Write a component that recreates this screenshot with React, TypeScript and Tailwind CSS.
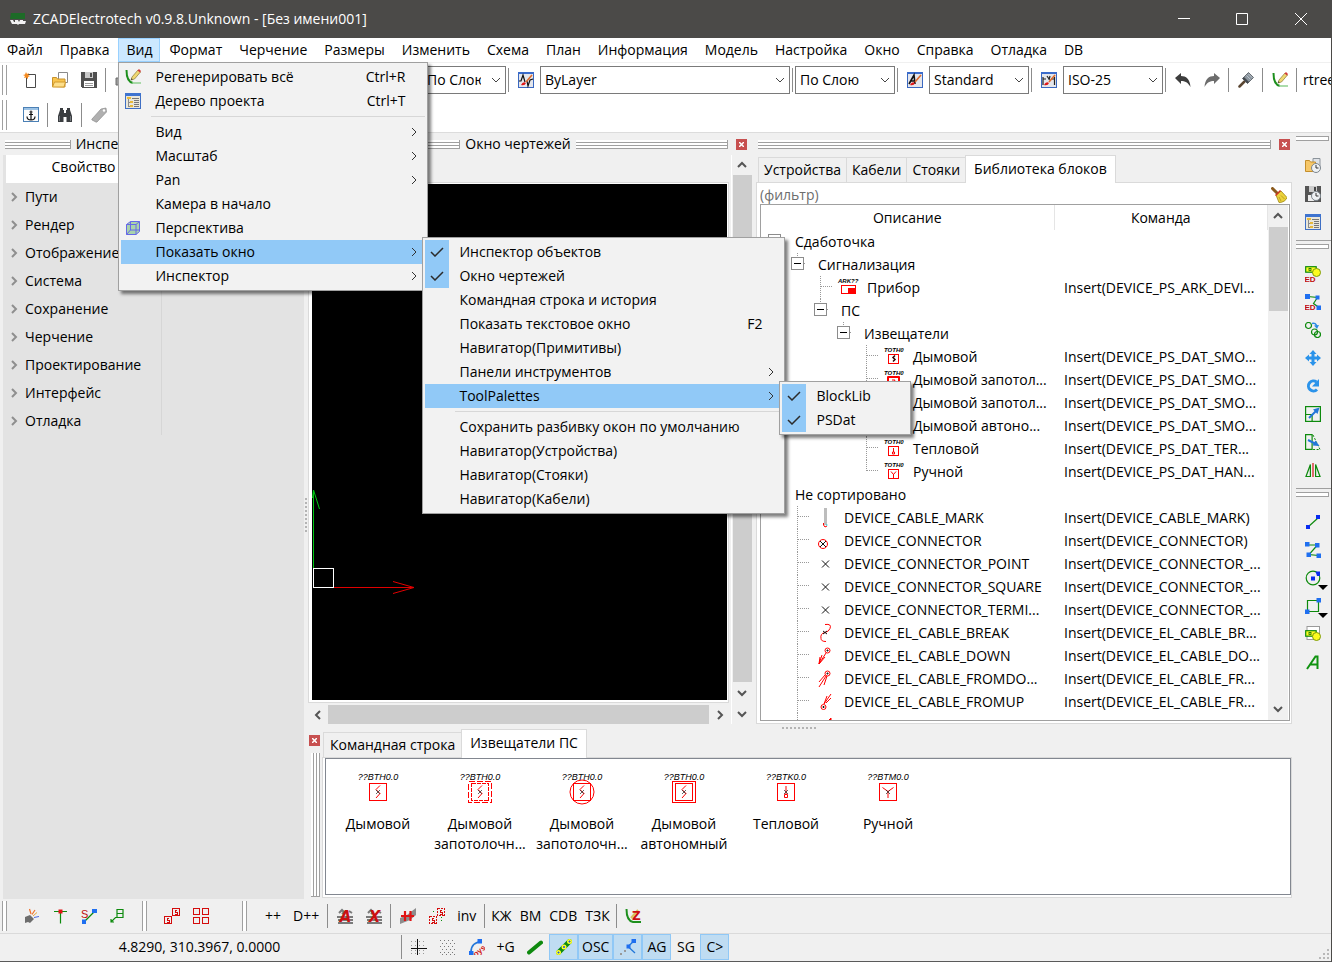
import { ReactNode } from 'react';
import clsx from 'clsx';

// ---------- icons ----------

function Svg({ children, size = 16, crisp = false }: { children: ReactNode; size?: number; crisp?: boolean }) {
  return (
    <svg
      width={size}
      height={size}
      viewBox="0 0 16 16"
      fill="none"
      className="shrink-0"
      shapeRendering={crisp ? 'crispEdges' : 'auto'}
      aria-hidden="true"
    >
      {children}
    </svg>
  );
}

const NewIcon = () => (
  <Svg>
    <path d="M5 2.500h7.500v13h-9V5" fill="#fff" stroke="#4a4a4a" />
    <path d="M3 0l1 2 2-1-1 2 2 1-2 1 0 2-2-1.500L1 6l1-2-2-1 2-.5z" fill="#f58a1f" />
  </Svg>
);

const OpenIcon = () => (
  <Svg>
    <path d="M6.500.500h9v10h-9z" fill="#fff" stroke="#8a8a8a" />
    <path d="M.5 14.500v-9h4l1 1.500h7.500v8z" fill="#f9c54e" stroke="#c8922a" />
    <path d="M.5 15l2-5h11l-1.500 5z" fill="#fddf8b" stroke="#d19a2e" />
  </Svg>
);

const SaveIcon = () => (
  <Svg crisp>
    <path d="M0 0h15l1 1v15H1l-1-1z" fill="#4f4f4f" />
    <path d="M4 0h8v6H4z" fill="#c9c9c9" />
    <path d="M9 1h2v4H9z" fill="#4f4f4f" />
    <path d="M3 9h10v6H3z" fill="#fff" />
    <path d="M4 11h8M4 13h8" stroke="#9a9a9a" />
  </Svg>
);

const PrintIcon = () => (
  <Svg>
    <path d="M1 6h14v7H1z" fill="#9c9c9c" stroke="#6c6c6c" />
    <path d="M4 1h8v5H4z" fill="#fff" stroke="#777" />
  </Svg>
);

const RegenIcon = () => (
  <Svg>
    <path d="M1.500 1C1.500 8 3 13 8 14" stroke="#1d8f1d" strokeWidth="2" />
    <path d="M7 14h9" stroke="#8fd08f" strokeWidth="1.500" />
    <path d="M6 11l1-3 6-7 2.500 2-6 7z" fill="#f0d872" stroke="#8a7a3a" strokeWidth=".7" />
    <path d="M12.500 1.500l2.500 2 1-1.500-2-2z" fill="#d43c3c" />
    <path d="M6 11l.6-1.800 1.200 1z" fill="#333" />
  </Svg>
);

const TreeIcon = () => (
  <Svg crisp>
    <rect x=".5" y=".5" width="15" height="15" fill="#e9e6da" stroke="#3e6fc4" />
    <path d="M0 0h16v3H0z" fill="#3e73cf" />
    <path d="M2 4h4v2H2zM5 8h3v2H5zM5 12h3v2H5z" fill="#e8b93a" />
    <path d="M3.500 6v7.500H5M3.500 9H5" stroke="#8a8a8a" />
    <path d="M7 5h7M9 7h5M9 9h5M9 11h5M9 13h5" stroke="#777" />
  </Svg>
);

const CubeIcon = () => (
  <Svg>
    <path d="M1.500 4.500l4-3h9v10l-3.500 3h-9.500z" fill="#a9d3ac" stroke="#6668e8" />
    <path d="M1.500 4.500h9.500l3.500-3M11 4.500v10M5.500 1.500v8.500h9M5.500 10l-4 4.500" stroke="#6668e8" />
  </Svg>
);

const AnchorIcon = () => (
  <Svg>
    <rect x=".5" y=".5" width="15" height="14" fill="#fdfdfd" stroke="#4b80b5" />
    <path d="M1 1h14v2H1z" fill="#9cc3e6" />
    <circle cx="8" cy="5" r="1" stroke="#111" />
    <path d="M8 6v7M6 7.500h4M4 9.500C4 12 6 13 8 13s4-1 4-3.500" stroke="#111" strokeWidth="1.200" />
  </Svg>
);

const BinocularsIcon = () => (
  <Svg>
    <path d="M3 1h3v2h1v3h2V3h1V1h3v2l1 3 1 3v6H9.500v-5h-3v5H1V9l1-3 1-3z" fill="#3a3d40" />
    <path d="M2.500 9v5M13.500 9v5" stroke="#75797d" />
  </Svg>
);

const TagIcon = () => (
  <Svg>
    <path d="M1 12L10 2l5-1 .5 4-9.500 10q-1 .5-2-.500l-3-1.500q-.5-.5 0-1z" fill="#b0b0b0" stroke="#8c8c8c" strokeWidth=".7" />
    <circle cx="13" cy="3.500" r="1.200" fill="#fff" />
  </Svg>
);

function StyleIcon({ kind }: { kind: 'line' | 'text' | 'dim' }) {
  return (
    <Svg>
      <rect x=".5" y=".5" width="15" height="15" fill="#e4e6ec" stroke="#3a68c0" />
      <path d="M0 0h16v2H0z" fill="#3a6bcb" />
      {kind === 'line' && <path d="M1 9h2l2-6 2 7M9 9l1 5 2-6 3-1" stroke="#111" strokeWidth="1.200" />}
      {kind === 'text' && <path d="M2 12l5-9 1 9M4 9h4" stroke="#111" strokeWidth="1.600" />}
      {kind === 'dim' && <path d="M2 5v8M13.500 5v8M2 7h3M10 7h3M6 4l2 3M9 4l-1 4" stroke="#222" strokeWidth="1.200" />}
      <path d="M8 10l6-7" stroke="#df6a2b" strokeWidth="1.600" />
      <path d="M3 13q2-4 5-2-1 3-5 2z" fill="#e01818" />
    </Svg>
  );
}

const UndoIcon = () => (
  <Svg>
    <path d="M0 6l6-5v3c5 0 9 3 9.500 11C13 10.500 10 9 6 9v3z" fill="#3d3d3d" />
  </Svg>
);

const RedoIcon = () => (
  <Svg>
    <path d="M16 6l-6-5v3C5 4 1 7 .5 15 3 10.500 6 9 10 9v3z" fill="#6d6d6d" />
  </Svg>
);

const BrushIcon = () => (
  <Svg>
    <path d="M1.500 14.500l5-5" stroke="#5a4632" strokeWidth="2.500" strokeLinecap="round" />
    <path d="M4.500 6.500l5 5 6-6L10.500.500z" fill="#8c969f" stroke="#4f565c" strokeWidth=".8" />
    <path d="M4.500 6.500l5 5 1.500-1.500-5-5z" fill="#44494e" />
    <path d="M8.500 3.500l4 4M10.500 2l4 4" stroke="#c3ccd4" strokeWidth=".8" />
  </Svg>
);

const BroomIcon = () => (
  <Svg>
    <path d="M1.500 1.500l5 5" stroke="#8a5a1d" strokeWidth="3" strokeLinecap="round" />
    <path d="M5 8l5-4 6 6.500c-1 3-4 5-8 5z" fill="#ecd23c" stroke="#9c8512" strokeWidth=".8" />
    <path d="M4.500 8.500l5-5" stroke="#cf3320" strokeWidth="1.500" />
    <path d="M8 10l2 4M10 8.500l3.500 3.500" stroke="#a88f17" strokeWidth=".7" />
  </Svg>
);

const Clock = () => (
  <>
    <circle cx="11" cy="10" r="4.500" fill="#eef1f4" stroke="#7c858d" />
    <path d="M11 7v3h2.500" stroke="#333" />
  </>
);

const OpenRecentIcon = () => (
  <Svg>
    <path d="M8 .5h7v9H8z" fill="#dfe3e8" stroke="#8d949b" />
    <path d="M.5 13.500v-11h4l1 1.500h5v9.500z" fill="#f6c768" stroke="#c58f2c" />
    <Clock />
  </Svg>
);

const SaveRecentIcon = () => (
  <Svg>
    <path d="M0 0h16v16H0z" fill="#555" />
    <path d="M4 0h8v6H4z" fill="#ccc" />
    <path d="M9 1h2v4H9z" fill="#444" />
    <path d="M3 9h6v6H3z" fill="#eee" />
    <Clock />
  </Svg>
);

const BlockShape = ({ y = 0 }: { y?: number }) => (
  <>
    <rect x=".7" y={y + 0.7} width="10.500" height="5.500" fill="#fcfc1e" stroke="#0d8a0d" strokeWidth="1.200" />
    <rect x="4" y={y + 2.5} width="2" height="2" stroke="#0d6a0d" strokeWidth=".8" />
    <circle cx="11.500" cy={y + 6.5} r="4" fill="#fcfc1e" stroke="#7d9a0d" />
  </>
);

const EdText = () => (
  <text x="-.5" y="16" fontSize="8" fontWeight="700" fill="#c00d0d" fontFamily="Liberation Sans, sans-serif">
    ED
  </text>
);

const EditBlockIcon = () => (
  <Svg>
    <BlockShape />
    <EdText />
  </Svg>
);

const EditPolyIcon = () => (
  <Svg>
    <path d="M2.500 2.500l10 1-4 6 5.500 4" stroke="#0d8a0d" strokeWidth="1.200" />
    <path d="M0 0h5v5H0zM10.500 1.500h4v4h-4zM11.500 11.500H16V16h-4.500z" fill="#1f6ff0" />
    <EdText />
  </Svg>
);

const CopyIcon = () => (
  <Svg>
    <circle cx="3.500" cy="3.500" r="3" stroke="#0d8a0d" strokeWidth="1.200" />
    <circle cx="9.500" cy="10" r="3" stroke="#0d8a0d" strokeWidth="1.200" />
    <circle cx="12.500" cy="12.500" r="3" stroke="#0d8a0d" strokeWidth="1.200" />
    <path d="M7 1.500q4-1 4.500 2.500" stroke="#2b8be6" strokeWidth="1.600" />
    <path d="M9 3.500l5-.5-2 4z" fill="#2b8be6" />
  </Svg>
);

const MoveIcon = () => (
  <Svg>
    <path
      d="M8 0l3.500 4H9.500v2.500H12v-2L16 8l-4 3.500v-2H9.500V12h2L8 16l-3.500-4h2V9.500H4v2L0 8l4-3.500v2h2.500V4h-2z"
      fill="#2b93ea"
    />
  </Svg>
);

const RotateIcon = () => (
  <Svg>
    <path d="M12 11.500A5 5 0 1 1 11.500 4" stroke="#2b93ea" strokeWidth="3" />
    <path d="M14 1v7.500H7z" fill="#2b93ea" />
  </Svg>
);

const ScaleIcon = () => (
  <Svg>
    <rect x=".6" y=".6" width="14.800" height="14.800" stroke="#0d8a0d" strokeWidth="1.200" />
    <path d="M.6 8.500h6.500v7" stroke="#0d8a0d" strokeWidth="1.200" />
    <path d="M4 12l7-7" stroke="#2277d8" strokeWidth="2" />
    <path d="M8 3.500L14.500 1.500 12.500 8z" fill="#2277d8" />
  </Svg>
);

const StretchIcon = () => (
  <Svg>
    <path d="M.6.600h6.500v14.800H.6z" stroke="#0d8a0d" strokeWidth="1.200" />
    <path d="M8 1l7 14.500H8" stroke="#0d8a0d" strokeDasharray="2 1.500" />
    <path d="M3 6l7 3.500" stroke="#2277d8" strokeWidth="2" />
    <path d="M10.500 6.500L14.500 12 7.500 11.500z" fill="#2277d8" />
  </Svg>
);

const MirrorIcon = () => (
  <Svg>
    <path d="M5.400 2.500v12H1zM10.600 2.500v12H15z" stroke="#0d8a0d" strokeWidth="1.200" />
    <path d="M8 1v14" stroke="#d01515" strokeWidth="1.200" />
  </Svg>
);

const LineIcon = () => (
  <Svg>
    <path d="M3 13l10-9" stroke="#0d8a0d" strokeWidth="1.200" />
    <path d="M1 11h4v4H1zM11 1h4v4h-4z" fill="#0a2cf0" />
  </Svg>
);

const PolylineIcon = () => (
  <Svg>
    <path d="M2.500 3h10L4 12.500l9.500 1" stroke="#0d8a0d" strokeWidth="1.200" />
    <path d="M0 0h4.500v4.500H0zM10 1h4.500v4.500H10zM1.500 10.500H6V15H1.500zM11.500 11.500H16V16h-4.500z" fill="#1f6ff0" />
  </Svg>
);

const CircleIcon = () => (
  <Svg>
    <circle cx="8" cy="8" r="6.800" stroke="#0d8a0d" strokeWidth="1.200" />
    <path d="M6 6.500h4v4H6zM10.500 1.500H15v4.500h-3z" fill="#0a2cf0" />
  </Svg>
);

const RectIcon = () => (
  <Svg>
    <path d="M2.500 2.500h11v11h-11z" stroke="#0d8a0d" strokeWidth="1.200" />
    <path d="M11.500 0H16v4.500h-4.500zM0 11.500h4.500V16H0z" fill="#1f6ff0" />
  </Svg>
);

const InsertBlockIcon = () => (
  <Svg>
    <rect x="2" y=".5" width="12.500" height="13" fill="#fff" stroke="#9a9a9a" />
    <BlockShape y={4} />
  </Svg>
);

const TextIcon = () => (
  <Svg>
    <path d="M2 15L10.500 2.500H12.500V15M5 10.500h7.500" stroke="#119311" strokeWidth="2" />
  </Svg>
);

// bottom toolbars
const LampIcon = () => (
  <Svg>
    <path d="M2 9l5-2 4 4-4 4-2-1-3 1z" fill="#6d6d6d" />
    <path d="M8 6L6.500 1M9 6.500L12 2" stroke="#f0702a" strokeWidth="1.200" />
    <path d="M10 8l4-3.500" stroke="#e9a53a" />
    <path d="M11 9.500l5-1" stroke="#4a66e0" />
  </Svg>
);

const TeeIcon = () => (
  <Svg>
    <path d="M2 3.500h13M8.500 3.500v12" stroke="#0d8a0d" strokeWidth="1.200" />
    <path d="M6.500 1.500h4v4h-4z" fill="#e01515" />
  </Svg>
);

const SplineIcon = () => (
  <Svg>
    <path d="M3 14L14 3" stroke="#0d8a0d" strokeWidth="1.200" />
    <path d="M1 11.500h4V16H1zM11 1h5v4h-5z" fill="#1f6ff0" />
    <text x="0" y="9.500" fontSize="11" fill="#c00d0d" fontFamily="Liberation Sans, sans-serif">S</text>
  </Svg>
);

const LeaderIcon = () => (
  <Svg>
    <path d="M7 1.500h6v8H7zM7 5.500h6M7 9.500H5.500L1 14M1 11v3h3" stroke="#0d8a0d" strokeWidth="1.200" />
  </Svg>
);

const LinkedBoxesIcon = () => (
  <Svg crisp>
    <path d="M.5 8.500h7v7h-7zM8.500.500h7v7h-7z" stroke="#d40c0c" />
    <path d="M5 10H3v2h2v2H3M13 2h-2v2h2v2h-2" stroke="#d40c0c" />
  </Svg>
);

const FourBoxesIcon = () => (
  <Svg crisp>
    <path d="M.5.500h6v6h-6zM9.500.500h6v6h-6zM.5 9.500h6v6h-6zM9.500 9.500h6v6h-6z" stroke="#d40c0c" />
  </Svg>
);

const CrossedTextIcon = ({ letter }: { letter: 'A' | 'X' }) => (
  <Svg>
    <path d="M0 9h16M1 12h15M1 15h15M2 5l3-3 2 2-2 2M12 3l3 2" stroke="#7a7a7a" strokeWidth="2" />
    <text x="8.500" y="13.500" textAnchor="middle" fontSize="15" fontWeight="700" fontStyle="italic" fill="#cc1010" fontFamily="DejaVu Sans, sans-serif">
      {letter}
    </text>
  </Svg>
);

const NumberingIcon = () => (
  <Svg>
    <path d="M0 16V10l7-3 5-4 4-3v7l-6 5z" fill="#8d8d8d" />
    <path d="M1 8h13M5 3v10M10.500 3v10" stroke="#e01515" strokeWidth="2.200" />
  </Svg>
);

const DashedBoxesIcon = () => (
  <Svg crisp>
    <path d="M.5 8.500h7v7h-7zM8.500.500h7v7h-7z" stroke="#d40c0c" strokeDasharray="2 1" />
    <path d="M5 10H3v2h2v2H3M13 2h-2v2h2v2h-2" stroke="#d40c0c" />
    <path d="M12.500 9v6M4.500 3v3" stroke="#0d8a0d" strokeDasharray="1 2" />
  </Svg>
);

const RegenZIcon = () => (
  <Svg>
    <path d="M1.500 1C1.500 8 3 13 8 14h8" stroke="#1d8f1d" strokeWidth="2" />
    <path d="M6 10l7-8" stroke="#d8c25c" strokeWidth="2" />
    <text x="7" y="12" fontSize="12" fontWeight="700" fill="#cc1010" fontFamily="DejaVu Sans, sans-serif">Z</text>
  </Svg>
);

const OrthoIcon = () => (
  <Svg crisp>
    <path d="M0 2h16M0 6h16M0 14h16M0 11h16" stroke="#999" strokeDasharray="1 3" />
    <path d="M6.500 0v16M0 9.500h16" stroke="#111" />
  </Svg>
);

const GridIcon = () => (
  <Svg crisp>
    <path d="M0 1h16M2 4h14M0 7h16M2 10h14M0 13h16M2 15h14" stroke="#777" strokeDasharray="1 3" />
  </Svg>
);

const OsnapIcon = () => (
  <Svg>
    <path d="M2 13C2 6 6 3 13 2.500" stroke="#2277d8" strokeWidth="1.600" />
    <path d="M0 12h4.500v4H0zM8.500 0H13v4.500H8.500z" fill="#1f6ff0" />
    <text x="3" y="16" fontSize="8" fontWeight="700" fill="#d01515" fontFamily="Liberation Sans, sans-serif" transform="rotate(-40 8 12)">
      oys
    </text>
  </Svg>
);

const ThickLineIcon = () => (
  <Svg>
    <path d="M2 13.500L14 3.500" stroke="#0f8a0f" strokeWidth="4" strokeLinecap="round" />
  </Svg>
);

const LineDotsIcon = () => (
  <Svg>
    <path d="M2.500 13.500L13.500 2.500" stroke="#0f8a0f" strokeWidth="5" strokeLinecap="round" />
    <g fill="#ffff2a">
      <circle cx="2.500" cy="13.500" r="2.500" />
      <circle cx="8" cy="8" r="2.500" />
      <circle cx="13.500" cy="2.500" r="2.500" />
    </g>
    <path d="M2 13h1v1H2zM7.500 7.500h1v1h-1zM13 2h1v1h-1z" stroke="#1c53d8" />
  </Svg>
);

const PolarIcon = () => (
  <Svg>
    <path d="M14 2L8 7.500 15 14" stroke="#2277d8" strokeWidth="1.300" />
    <path d="M11.500 0H16v4h-4.500zM6.500 5.500h4V9.500h-4z" fill="#1f6ff0" />
    <path d="M0 14h2v2H0zM4 11h2v2H4z" fill="#999" />
  </Svg>
);

// ---------- detector symbols ----------

type Detector = 'smoke' | 'dashed' | 'round' | 'double' | 'heat' | 'manual';

function DetectorIcon({ kind, label }: { kind: Detector; label: string }) {
  return (
    <div className="flex h-9 flex-col items-center">
      <span className="font-['Liberation_Sans',sans-serif] text-[9px] leading-[12px] text-black italic">{label}</span>
      <svg width="28" height="26" viewBox="0 0 28 26" fill="none" stroke="#ff0000" className="-mt-1 shrink-0" aria-hidden="true">
        <path d="M5.500 4.500h17v17h-17z" shapeRendering="crispEdges" strokeDasharray={kind === 'dashed' ? '4 1' : undefined} />
        {kind === 'dashed' && <path d="M2.500 2.500h23v21h-23z" shapeRendering="crispEdges" strokeDasharray="6 2" />}
        {kind === 'double' && <path d="M2.500 2.500h23v21h-23z" shapeRendering="crispEdges" />}
        {kind === 'round' && <circle cx="14" cy="13" r="12" />}
        {kind === 'heat' && <path d="M14 7v8M12.500 15.500h3v3h-3z" />}
        {kind === 'manual' && <path d="M8.500 8.500l5.500 4 5.500-4M14 12.500V19" />}
        {!['heat', 'manual'].includes(kind) && <path d="M16 6.500l-4 4 4 4-4 4.500" />}
        <path d="M12 11l4 4M16 11l-4 4" stroke="#222" strokeWidth=".7" />
      </svg>
    </div>
  );
}

type TreeIconKind =
  | 'ark' | 'smoke' | 'ceiling' | 'heat' | 'manual' | 'mark' | 'connector' | 'point' | 'break' | 'down' | 'fromdown' | 'fromup' | 'cut';

function DeviceIcon({ kind }: { kind: TreeIconKind }) {
  const boxed = ['smoke', 'ceiling', 'heat', 'manual'].includes(kind);
  return (
    <svg width="20" height="20" viewBox="0 0 20 20" fill="none" stroke="#ff0000" className="shrink-0 overflow-visible" aria-hidden="true">
      {(boxed || kind === 'ark') && (
        <text x="0" y="5" fontSize="6" fontStyle="italic" fontWeight="700" fill="#000" stroke="none" fontFamily="Liberation Sans, sans-serif">
          {kind === 'ark' ? 'ARK??' : 'ТОТН0'}
        </text>
      )}
      {boxed && <path d="M4.500 7.500h10v9h-10z" shapeRendering="crispEdges" />}
      {kind === 'smoke' && <path d="M11 8.500l-2 2 2 2-2 2" stroke="#300" strokeWidth="1.500" />}
      {kind === 'ceiling' && <path d="M3.500 6.500h12v11h-12zM8 10h3l-2 4" />}
      {kind === 'heat' && <path d="M9.500 9v4M8.500 13h2v2h-2z" />}
      {kind === 'manual' && <path d="M7 9.500l2.500 3 2.500-3M9.500 12v4" />}
      {kind === 'ark' && (
        <>
          <path d="M3.500 7.500h14v8h-14z" shapeRendering="crispEdges" />
          <path d="M10 10h8v6h-8z" fill="#ff0000" stroke="none" />
        </>
      )}
      {kind === 'mark' && (
        <>
          <path d="M10.500 0v17" stroke="#bdbdbd" strokeWidth="3" />
          <path d="M8.500 15v2l1.500 2 2-1" />
          <path d="M11 17h1.500" stroke="#00d8e8" />
        </>
      )}
      {kind === 'connector' && (
        <>
          <circle cx="8" cy="13" r="4.500" />
          <path d="M5 10l6 6M11 10l-6 6" stroke="#111" />
        </>
      )}
      {kind === 'point' && <path d="M7 6.500l7 7M14 6.500l-7 7" stroke="#111" />}
      {kind === 'break' && (
        <>
          <path d="M10 1.500q7-1 5 4-1 3-5 4-5 1-4 6 0 3 5 3" />
          <path d="M8 8l4 3M12 8l-4 3" stroke="#111" />
        </>
      )}
      {kind === 'down' && (
        <>
          <circle cx="12.500" cy="4.500" r="2.500" />
          <path d="M12 4h1v1h-1z" stroke="#111" />
          <path d="M11 7L4 18l1-7M4 18l6-7M4 18l3-9" />
        </>
      )}
      {kind === 'fromdown' && (
        <>
          <circle cx="12.500" cy="4.500" r="2.500" />
          <path d="M12 4h1v1h-1z" stroke="#111" />
          <path d="M11 7L4 18M12 7L9 16M10 6l-6 7" />
        </>
      )}
      {kind === 'fromup' && (
        <>
          <circle cx="8.500" cy="15" r="2.500" />
          <path d="M8 14.500h1v1H8z" stroke="#111" />
          <path d="M9 12l7-10M9 12L12 4M11 11l5-5" />
        </>
      )}
      {kind === 'cut' && <path d="M12 7l4-4v4z" fill="#ff0000" />}
    </svg>
  );
}

// ---------- shared pieces ----------

function Chevron({ dir, className = '' }: { dir: 'up' | 'down' | 'left' | 'right'; className?: string }) {
  const paths = { up: 'M1 7l4-4 4 4', down: 'M1 3l4 4 4-4', left: 'M7 1L3 5l4 4', right: 'M3 1l4 4-4 4' };
  return (
    <svg width="10" height="10" viewBox="0 0 10 10" fill="none" stroke="currentColor" className={clsx('shrink-0', className)} aria-hidden="true">
      <path d={paths[dir]} strokeWidth="inherit" />
    </svg>
  );
}

const HGrip = ({ className = '' }: { className?: string }) => (
  <div className={clsx('h-[9px] border-r border-[#a0a0a0] bg-[repeating-linear-gradient(to_bottom,#fff_0px,#fff_2px,#a0a0a0_2px,#a0a0a0_3px)]', className)} />
);

const VGrip = ({ className = '' }: { className?: string }) => (
  <div className={clsx('h-[30px] w-[5px] shrink-0 border-x border-[#a0a0a0] bg-white', className)} />
);

const Separator = () => <div className="mx-[2px] h-6 w-px shrink-0 bg-[#8c8c8c]" />;

function CloseButton({ label }: { label: string }) {
  return (
    <button aria-label={label} className="flex size-[11px] shrink-0 items-center justify-center bg-[#c75050]">
      <svg width="5" height="5" viewBox="0 0 5 5" stroke="#fff" strokeWidth="1.500" aria-hidden="true">
        <path d="M0 0l5 5M5 0L0 5" />
      </svg>
    </button>
  );
}

function ToolButton({ label, children }: { label: string; children: ReactNode }) {
  return (
    <button aria-label={label} className="flex h-7 w-[29px] shrink-0 items-center justify-center">
      {children}
    </button>
  );
}

function Combo({ label, value, width }: { label: string; value: string; width: string }) {
  return (
    <div className={clsx('relative flex shrink-0 items-center', width)}>
      <select aria-label={label} className="h-7 w-full appearance-none border border-[#7a7a7a] bg-white pr-6 pl-1">
        <option>{value}</option>
      </select>
      <Chevron dir="down" className="pointer-events-none absolute right-[5px] text-[#444]" />
    </div>
  );
}

// ---------- menus ----------

type MenuEntry =
  | 'sep'
  | {
      label: string;
      shortcut?: string;
      icon?: ReactNode;
      checked?: boolean;
      arrow?: boolean;
      width?: string;
      children?: MenuEntry[];
    };

const viewMenu: MenuEntry[] = [
  { label: 'Регенерировать всё', shortcut: 'Ctrl+R', icon: <RegenIcon /> },
  { label: 'Дерево проекта', shortcut: 'Ctrl+T', icon: <TreeIcon /> },
  'sep',
  { label: 'Вид', arrow: true },
  { label: 'Масштаб', arrow: true },
  { label: 'Pan', arrow: true },
  { label: 'Камера в начало' },
  { label: 'Перспектива', icon: <CubeIcon /> },
  {
    label: 'Показать окно',
    arrow: true,
    width: 'w-[363px]',
    children: [
      { label: 'Инспектор объектов', checked: true },
      { label: 'Окно чертежей', checked: true },
      { label: 'Командная строка и история' },
      { label: 'Показать текстовое окно', shortcut: 'F2' },
      { label: 'Навигатор(Примитивы)' },
      { label: 'Панели инструментов', arrow: true },
      {
        label: 'ToolPalettes',
        arrow: true,
        width: 'w-[132px]',
        children: [
          { label: 'BlockLib', checked: true },
          { label: 'PSDat', checked: true },
        ],
      },
      'sep',
      { label: 'Сохранить разбивку окон по умолчанию' },
      { label: 'Навигатор(Устройства)' },
      { label: 'Навигатор(Стояки)' },
      { label: 'Навигатор(Кабели)' },
    ],
  },
  { label: 'Инспектор', arrow: true },
];

function Menu({ items, className }: { items: MenuEntry[]; className: string }) {
  return (
    <div role="menu" className={clsx('absolute z-20 border border-[#a0a0a0] bg-[#f2f2f2] p-[2px] shadow-[3px_3px_3px_rgba(0,0,0,0.5)]', className)}>
      {items.map((item, i) =>
        item === 'sep' ? (
          <div key={i} className="h-[7px] pt-[3px] pl-[30px]">
            <div className="h-px bg-[#d7d7d7]" />
          </div>
        ) : (
          <div key={i} className="relative">
            <button
              role={item.checked ? 'menuitemcheckbox' : 'menuitem'}
              aria-checked={item.checked}
              className={clsx('flex h-6 w-full items-center whitespace-nowrap', item.children && 'bg-[#91c9f7]')}
            >
              <span className={clsx('mr-[10px] flex size-6 shrink-0 items-center justify-center', item.checked && 'bg-[#91c9f7]')}>
                {item.icon}
                {item.checked && (
                  <svg width="14" height="10" viewBox="0 0 14 10" fill="none" stroke="#2b2b2b" strokeWidth="1.500" aria-hidden="true">
                    <path d="M1 5l4 4 8-8" />
                  </svg>
                )}
              </span>
              <span className="leading-[22px]">{item.label}</span>
              {item.shortcut && <span className="mr-5 ml-auto leading-[22px]">{item.shortcut}</span>}
              {item.arrow && <Chevron dir="right" className="mr-[6px] ml-auto text-[#333]" />}
            </button>
            {item.children && <Menu items={item.children} className={clsx('-top-[3px] left-full -ml-[3px]', item.width)} />}
          </div>
        )
      )}
    </div>
  );
}

const menuBar = [
  'Файл', 'Правка', 'Вид', 'Формат', 'Черчение', 'Размеры', 'Изменить', 'Схема', 'План',
  'Информация', 'Модель', 'Настройка', 'Окно', 'Справка', 'Отладка', 'DB',
];

function MenuBar() {
  return (
    <nav className="flex h-[25px] shrink-0 gap-px border-b border-[#f0f0f0] bg-white">
      {menuBar.map((name) => (
        <div key={name} className="relative first:-ml-px">
          <button
            className={clsx('h-6 border px-[7px]', name === 'Вид' ? 'border-[#99d1ff] bg-[#cce8ff]' : 'border-transparent')}
          >
            {name}
          </button>
          {name === 'Вид' && <Menu items={viewMenu} className="top-full left-0 w-[310px]" />}
        </div>
      ))}
    </nav>
  );
}

// ---------- title and toolbars ----------

function TitleBar() {
  return (
    <header className="flex h-[38px] shrink-0 items-center bg-[#4b4a48] pl-[10px] text-white">
      <svg width="16" height="12" viewBox="0 0 16 12" className="mr-[7px]" aria-hidden="true">
        <path d="M1 0h14v6H0z" fill="#1d6b27" />
        <path d="M0 7h3l1 2h1V7h3l1 2 1-2h3v1h3l-1 3H9l-1 1-1-1H2z" fill="#f2f2f2" />
      </svg>
      <h1 className="flex-1 truncate">ZCADElectrotech v0.9.8.Unknown - [Без имени001]</h1>
      <button aria-label="Свернуть" className="flex h-full w-[58px] items-center justify-center">
        <svg width="12" height="12" stroke="#fff" aria-hidden="true"><path d="M0 5.500h12" /></svg>
      </button>
      <button aria-label="Развернуть" className="flex h-full w-[58px] items-center justify-center">
        <svg width="12" height="12" stroke="#fff" fill="none" aria-hidden="true"><path d="M.5.500h11v11H.5z" /></svg>
      </button>
      <button aria-label="Закрыть" className="flex h-full w-[60px] items-center justify-center">
        <svg width="12" height="12" stroke="#fff" aria-hidden="true"><path d="M0 0l12 12M12 0L0 12" /></svg>
      </button>
    </header>
  );
}

function TopToolbars() {
  return (
    <div className="h-[70px] shrink-0 overflow-hidden border-b border-[#dcdcdc] bg-white">
      <div className="flex h-[34px] items-center pl-[2px]">
        <VGrip className="mr-[9px]" />
        <ToolButton label="Новый"><NewIcon /></ToolButton>
        <ToolButton label="Открыть"><OpenIcon /></ToolButton>
        <ToolButton label="Сохранить"><SaveIcon /></ToolButton>
        <Separator />
        <ToolButton label="Печать"><PrintIcon /></ToolButton>
        <Separator />
        <Combo label="Слой" value="0" width="ml-[58px] mr-3 w-[210px]" />
        <Combo label="Цвет" value="По Слою" width="w-[84px]" />
        <Separator />
        <ToolButton label="Типы линий"><StyleIcon kind="line" /></ToolButton>
        <Combo label="Тип линии" value="ByLayer" width="w-[250px]" />
        <Separator />
        <Combo label="Вес линии" value="По Слою" width="w-[100px]" />
        <Separator />
        <ToolButton label="Стили текста"><StyleIcon kind="text" /></ToolButton>
        <Combo label="Стиль текста" value="Standard" width="w-[100px]" />
        <Separator />
        <ToolButton label="Стили размеров"><StyleIcon kind="dim" /></ToolButton>
        <Combo label="Стиль размеров" value="ISO-25" width="w-[100px]" />
        <Separator />
        <ToolButton label="Отменить"><UndoIcon /></ToolButton>
        <ToolButton label="Повторить"><RedoIcon /></ToolButton>
        <Separator />
        <ToolButton label="Копировать свойства"><BrushIcon /></ToolButton>
        <Separator />
        <ToolButton label="Регенерировать"><RegenIcon /></ToolButton>
        <Separator />
        <button className="px-1">rtree</button>
      </div>
      <div className="flex h-9 items-center pl-[2px]">
        <VGrip className="mr-[9px]" />
        <ToolButton label="Привязка"><AnchorIcon /></ToolButton>
        <Separator />
        <ToolButton label="Найти"><BinocularsIcon /></ToolButton>
        <Separator />
        <ToolButton label="Метка"><TagIcon /></ToolButton>
      </div>
    </div>
  );
}

// ---------- inspector ----------

const groups = ['Пути', 'Рендер', 'Отображение', 'Система', 'Сохранение', 'Черчение', 'Проектирование', 'Интерфейс', 'Отладка'];

function Inspector() {
  return (
    <aside className="flex w-[304px] shrink-0 flex-col pl-[3px]">
      <div className="flex h-[22px] items-center gap-[5px] pl-[2px]">
        <HGrip className="flex-1" />
        <h2>Инспектор объектов</h2>
        <HGrip className="flex-1" />
        <CloseButton label="Закрыть инспектор" />
      </div>
      <div className="flex-1 bg-[#e3e3e3]">
        <div className="ml-[3px] flex h-7 items-start bg-white pt-[2px]">
          <span className="w-[155px] text-center">Свойство</span>
          <span className="flex-1 text-center">Значение</span>
        </div>
        <ul className="w-[159px] border-r border-[#d6d6d6]">
          {groups.map((g) => (
            <li key={g}>
              <button className="flex h-7 w-full items-center gap-[6px] pl-[6px]">
                <Chevron dir="right" className="stroke-2 text-[#8f8f8f]" />
                {g}
              </button>
            </li>
          ))}
        </ul>
      </div>
    </aside>
  );
}

// ---------- drawing window ----------

function DrawingWindow() {
  return (
    <section className="flex min-w-0 flex-1 flex-col">
      <div className="flex h-[22px] items-center pr-[5px]">
        <HGrip className="flex-1" />
        <h2 className="px-[5px]">Окно чертежей</h2>
        <HGrip className="flex-1" />
        <div className="ml-2"><CloseButton label="Закрыть чертежи" /></div>
      </div>
      <div className="flex min-h-0 flex-1">
        <div className="flex min-w-0 flex-1 flex-col">
          <div className="mt-[27px] mr-[2px] min-h-0 flex-1 border border-[#dadada] bg-white pt-px pr-px pb-[2px] pl-[3px]">
            <div className="relative h-full bg-black">
              <svg width="104" height="106" viewBox="0 0 104 106" fill="none" className="absolute bottom-[106px] left-0" aria-hidden="true">
                <path d="M1.500 100V2M1.500 2l-1 8M1.500 2l6 19" stroke="#00c814" />
                <path d="M1.500 80.500h20v19h-20z" stroke="#fff" shapeRendering="crispEdges" />
                <path d="M22 99.500h80M81 93.500l21 6-21 6" stroke="#e00000" />
              </svg>
            </div>
          </div>
          <div className="mt-[2px] flex h-[19px] items-center text-[#555]">
            <Chevron dir="left" className="mx-[5px] stroke-2" />
            <div className="h-full flex-1 bg-[#cdcdcd]" />
            <Chevron dir="right" className="mx-[6px] stroke-2" />
          </div>
        </div>
        <div className="flex w-[21px] shrink-0 flex-col items-center border-l border-white text-[#555]">
          <Chevron dir="up" className="my-[5px] stroke-2" />
          <div className="w-[19px] flex-1 bg-[#cdcdcd]" />
          <Chevron dir="down" className="my-[6px] stroke-2" />
          <Chevron dir="down" className="my-[5px] stroke-2" />
        </div>
      </div>
    </section>
  );
}

// ---------- block library ----------

type Row = { level: number; label: string; command?: string; icon?: TreeIconKind; last?: boolean };

const rows: Row[] = [
  { level: 0, label: 'Сдаботочка' },
  { level: 1, label: 'Сигнализация', last: true },
  { level: 2, label: 'Прибор', command: 'Insert(DEVICE_PS_ARK_DEVI...', icon: 'ark' },
  { level: 2, label: 'ПС', last: true },
  { level: 3, label: 'Извещатели', last: true },
  { level: 4, label: 'Дымовой', command: 'Insert(DEVICE_PS_DAT_SMO...', icon: 'smoke' },
  { level: 4, label: 'Дымовой запотол...', command: 'Insert(DEVICE_PS_DAT_SMO...', icon: 'ceiling' },
  { level: 4, label: 'Дымовой запотол...', command: 'Insert(DEVICE_PS_DAT_SMO...', icon: 'ceiling' },
  { level: 4, label: 'Дымовой автоно...', command: 'Insert(DEVICE_PS_DAT_SMO...', icon: 'ceiling' },
  { level: 4, label: 'Тепловой', command: 'Insert(DEVICE_PS_DAT_TER...', icon: 'heat' },
  { level: 4, label: 'Ручной', command: 'Insert(DEVICE_PS_DAT_HAN...', icon: 'manual', last: true },
  { level: 0, label: 'Не сортировано' },
  { level: 1, label: 'DEVICE_CABLE_MARK', command: 'Insert(DEVICE_CABLE_MARK)', icon: 'mark' },
  { level: 1, label: 'DEVICE_CONNECTOR', command: 'Insert(DEVICE_CONNECTOR)', icon: 'connector' },
  { level: 1, label: 'DEVICE_CONNECTOR_POINT', command: 'Insert(DEVICE_CONNECTOR_...', icon: 'point' },
  { level: 1, label: 'DEVICE_CONNECTOR_SQUARE', command: 'Insert(DEVICE_CONNECTOR_...', icon: 'point' },
  { level: 1, label: 'DEVICE_CONNECTOR_TERMI...', command: 'Insert(DEVICE_CONNECTOR_...', icon: 'point' },
  { level: 1, label: 'DEVICE_EL_CABLE_BREAK', command: 'Insert(DEVICE_EL_CABLE_BR...', icon: 'break' },
  { level: 1, label: 'DEVICE_EL_CABLE_DOWN', command: 'Insert(DEVICE_EL_CABLE_DO...', icon: 'down' },
  { level: 1, label: 'DEVICE_EL_CABLE_FROMDO...', command: 'Insert(DEVICE_EL_CABLE_FR...', icon: 'fromdown' },
  { level: 1, label: 'DEVICE_EL_CABLE_FROMUP', command: 'Insert(DEVICE_EL_CABLE_FR...', icon: 'fromup' },
  { level: 1, label: '', icon: 'cut' },
];

function Branch({ leaf, last, top }: { leaf: boolean; last?: boolean; top: boolean }) {
  return (
    <svg width="23" height="23" viewBox="0 0 23 23" fill="none" className="shrink-0" shapeRendering="crispEdges" aria-hidden="true">
      {!top && <path d={last ? 'M10.500 0v11' : 'M10.500 0v23'} stroke="#999" strokeDasharray="1 1" />}
      <path d={leaf ? 'M11 10.500h12' : 'M11 10.500h8'} stroke="#999" strokeDasharray="1 1" />
      {!leaf && (
        <>
          <path d="M4.500 4.500h12v12h-12z" fill="#fff" stroke="#8c8c8c" />
          <path d="M7 10.500h7" stroke="#000" />
        </>
      )}
    </svg>
  );
}

const libraryTabs = ['Устройства', 'Кабели', 'Стояки', 'Библиотека блоков'];

function BlockLibrary() {
  return (
    <section className="flex w-[536px] shrink-0 flex-col">
      <div className="flex h-[22px] items-center gap-2 pr-[2px] pl-[2px]">
        <HGrip className="flex-1" />
        <CloseButton label="Закрыть библиотеку" />
      </div>
      <div role="tablist" className="flex h-[27px] items-end pl-[2px]">
        {libraryTabs.map((tab, i) =>
          i === 3 ? (
            <button key={tab} role="tab" aria-selected className="relative z-10 -mb-px h-7 border border-b-0 border-[#dadada] bg-white px-2 pb-px">
              {tab}
            </button>
          ) : (
            <button key={tab} role="tab" className="h-[25px] border border-r-0 border-b-0 border-[#dadada] bg-[#f0f0f0] px-[5px]">
              {tab}
            </button>
          )
        )}
      </div>
      <div className="flex min-h-0 flex-1 flex-col border border-[#dadada] bg-white pt-[2px] pr-px pb-[2px] pl-[3px]">
        <div className="flex h-[19px] items-center pr-[3px]">
          <input aria-label="Фильтр" placeholder="(фильтр)" className="min-w-0 flex-1 placeholder:text-[#6d6d6d] focus:outline-none" />
          <button aria-label="Очистить фильтр"><BroomIcon /></button>
        </div>
        <div className="flex min-h-0 flex-1 border border-[#a0a0a0]">
          <div className="min-w-0 flex-1 overflow-hidden">
            <table className="w-full table-fixed border-collapse">
              <thead>
                <tr className="h-[25px]">
                  <th className="w-[293px] border-r border-[#e5e5e5] p-0 font-normal">Описание</th>
                  <th className="border-r border-[#e5e5e5] p-0 font-normal">Команда</th>
                </tr>
              </thead>
              <tbody>
                {rows.map((row, i) => (
                  <tr key={i} className="h-[23px]">
                    <td className="p-0">
                      <div
                        className={clsx(
                          'flex h-[23px] items-center whitespace-nowrap',
                          row.level === 0 && 'pl-[3px]',
                          row.level === 1 && 'pl-[26px]',
                          row.level === 2 && 'pl-[49px]',
                          row.level === 3 && 'pl-[72px]',
                          row.level === 4 && 'pl-[95px]'
                        )}
                      >
                        <Branch leaf={!!row.icon} last={row.last} top={i === 0} />
                        {row.icon && <span className="pl-[5px]"><DeviceIcon kind={row.icon} /></span>}
                        <span className={row.icon ? 'pl-[9px]' : 'pl-2'}>{row.label}</span>
                      </div>
                    </td>
                    <td className="p-0 pl-[10px] whitespace-nowrap">{row.command}</td>
                  </tr>
                ))}
              </tbody>
            </table>
          </div>
          <div className="flex w-[21px] shrink-0 flex-col items-center border-r border-white bg-[#f0f0f0] text-[#555]">
            <Chevron dir="up" className="my-[6px] stroke-2" />
            <div className="h-[84px] w-[19px] bg-[#cdcdcd]" />
            <div className="flex-1" />
            <Chevron dir="down" className="my-[6px] stroke-2" />
          </div>
        </div>
      </div>
    </section>
  );
}

// ---------- palettes ----------

const palette: { kind: Detector; label: string; lines: string[] }[] = [
  { kind: 'smoke', label: '??BTH0.0', lines: ['Дымовой'] },
  { kind: 'dashed', label: '??BTH0.0', lines: ['Дымовой', 'запотолочн...'] },
  { kind: 'round', label: '??BTH0.0', lines: ['Дымовой', 'запотолочн...'] },
  { kind: 'double', label: '??BTH0.0', lines: ['Дымовой', 'автономный'] },
  { kind: 'heat', label: '??BTK0.0', lines: ['Тепловой'] },
  { kind: 'manual', label: '??BTM0.0', lines: ['Ручной'] },
];

function PaletteDock() {
  return (
    <section className="flex h-[170px] shrink-0 pb-px">
      <div className="flex w-3 shrink-0 flex-col items-end pt-[6px]">
        <CloseButton label="Закрыть палитру" />
        <div className="mt-[7px] mb-px w-[9px] flex-1 border-b border-[#a0a0a0] bg-[repeating-linear-gradient(to_right,#fff_0px,#fff_2px,#a0a0a0_2px,#a0a0a0_3px)]" />
      </div>
      <div className="flex min-w-0 flex-1 flex-col pl-[2px]">
        <div role="tablist" className="flex h-7 items-end pl-px">
          <button role="tab" className="h-[25px] border border-r-0 border-b-0 border-[#dadada] px-[6px]">Командная строка</button>
          <button role="tab" aria-selected className="relative z-10 -mb-px h-[29px] border border-b-0 border-[#dadada] bg-white px-2 pb-[2px]">
            Извещатели ПС
          </button>
        </div>
        <div className="flex-1 border border-[#dadada] bg-white pb-[2px] pl-[2px]">
          <div className="flex h-full border border-[#828790] pt-[12px] pl-px">
            {palette.map((item, i) => (
              <button key={i} className="flex w-[102px] flex-col items-center">
                <DetectorIcon kind={item.kind} label={item.label} />
                <span className="mt-[7px] leading-5">
                  {item.lines.map((line) => (
                    <span key={line} className="block">{line}</span>
                  ))}
                </span>
              </button>
            ))}
          </div>
        </div>
      </div>
    </section>
  );
}

// ---------- right toolbar ----------

const sideGroups: { label: string; icon: ReactNode; drop?: boolean }[][] = [
  [
    { label: 'Открыть последний', icon: <OpenRecentIcon /> },
    { label: 'Автосохранение', icon: <SaveRecentIcon /> },
    { label: 'Дерево проекта', icon: <TreeIcon /> },
  ],
  [
    { label: 'Редактировать блок', icon: <EditBlockIcon /> },
    { label: 'Редактировать полилинию', icon: <EditPolyIcon /> },
    { label: 'Копировать', icon: <CopyIcon /> },
    { label: 'Переместить', icon: <MoveIcon /> },
    { label: 'Повернуть', icon: <RotateIcon /> },
    { label: 'Масштабировать', icon: <ScaleIcon /> },
    { label: 'Растянуть', icon: <StretchIcon /> },
    { label: 'Отразить', icon: <MirrorIcon /> },
  ],
  [
    { label: 'Отрезок', icon: <LineIcon /> },
    { label: 'Полилиния', icon: <PolylineIcon /> },
    { label: 'Круг', icon: <CircleIcon />, drop: true },
    { label: 'Прямоугольник', icon: <RectIcon />, drop: true },
    { label: 'Вставить блок', icon: <InsertBlockIcon /> },
    { label: 'Текст', icon: <TextIcon /> },
  ],
];

function SideToolbar() {
  return (
    <aside className="flex w-[35px] shrink-0 flex-col">
      {sideGroups.map((group, i) => (
        <div key={i} className={clsx('flex flex-col items-start', i > 0 && 'mt-[4px] border-t border-[#a0a0a0]')}>
          <div className="mt-[3px] mb-[11px] h-[5px] w-[33px] border-y border-r border-[#a0a0a0] bg-white" />
          {group.map((tool) => (
            <button key={tool.label} aria-label={tool.label} className="relative flex h-7 w-[34px] items-center justify-center">
              {tool.icon}
              {tool.drop && (
                <svg width="10" height="5" className="absolute right-[2px] bottom-[2px]" aria-hidden="true">
                  <path d="M0 0h10L5 5z" fill="#000" />
                </svg>
              )}
            </button>
          ))}
        </div>
      ))}
    </aside>
  );
}

// ---------- bottom ----------

const TextTool = ({ children, wide = false }: { children: string; wide?: boolean }) => (
  <button className={wide ? 'px-[6px]' : 'px-1'}>{children}</button>
);

function BottomToolbar() {
  return (
    <div className="flex h-[35px] shrink-0 items-center border-b border-[#dadada] pl-[2px]">
      <VGrip className="mr-[9px]" />
      <ToolButton label="Свет"><LampIcon /></ToolButton>
      <ToolButton label="Стояк"><TeeIcon /></ToolButton>
      <ToolButton label="Суперлиния"><SplineIcon /></ToolButton>
      <ToolButton label="Выноска"><LeaderIcon /></ToolButton>
      <VGrip className="mr-[10px] ml-[10px]" />
      <ToolButton label="Связать"><LinkedBoxesIcon /></ToolButton>
      <ToolButton label="Разместить"><FourBoxesIcon /></ToolButton>
      <VGrip className="mr-3 ml-[27px]" />
      <TextTool wide>++</TextTool>
      <TextTool wide>D++</TextTool>
      <Separator />
      <ToolButton label="Скрыть текст"><CrossedTextIcon letter="A" /></ToolButton>
      <ToolButton label="Удалить текст"><CrossedTextIcon letter="X" /></ToolButton>
      <Separator />
      <ToolButton label="Нумерация"><NumberingIcon /></ToolButton>
      <ToolButton label="Выделить связи"><DashedBoxesIcon /></ToolButton>
      <TextTool wide>inv</TextTool>
      <Separator />
      <TextTool>КЖ</TextTool>
      <TextTool>BM</TextTool>
      <TextTool>CDB</TextTool>
      <TextTool>ТЗК</TextTool>
      <Separator />
      <ToolButton label="Регенерировать Z"><RegenZIcon /></ToolButton>
    </div>
  );
}

const statusTools: { label: string; icon?: ReactNode; on?: boolean }[] = [
  { label: 'Орто', icon: <OrthoIcon /> },
  { label: 'Сетка', icon: <GridIcon /> },
  { label: 'Привязка', icon: <OsnapIcon /> },
  { label: '+G' },
  { label: 'Вес линий', icon: <ThickLineIcon /> },
  { label: 'Ручки', icon: <LineDotsIcon />, on: true },
  { label: 'OSC', on: true },
  { label: 'Полярное', icon: <PolarIcon />, on: true },
  { label: 'AG', on: true },
  { label: 'SG' },
  { label: 'C>', on: true },
];

function StatusBar() {
  return (
    <footer className="flex h-7 shrink-0 items-center border-b border-[#5a5a5a] pb-px">
      <output className="w-[399px] text-center">4.8290, 310.3967, 0.0000</output>
      <Separator />
      <div className="flex">
        {statusTools.map((tool) => (
          <button
            key={tool.label}
            aria-label={tool.label}
            aria-pressed={!!tool.on}
            className={clsx(
              'flex h-[26px] min-w-[29px] items-center justify-center border px-[3px]',
              tool.on ? 'border-[#90c8f6] bg-[#bfdcf2]' : 'border-transparent'
            )}
          >
            {tool.icon ?? tool.label}
          </button>
        ))}
      </div>
      <svg width="12" height="12" fill="#b8b8b8" className="mr-px ml-auto self-end" aria-hidden="true">
        <path d="M9 1h2v2H9zM9 5h2v2H9zM9 9h2v2H9zM5 5h2v2H5zM5 9h2v2H5zM1 9h2v2H1z" />
      </svg>
    </footer>
  );
}

export default function App() {
  return (
    <div className="flex h-screen flex-col overflow-hidden border-r border-[#4b4a48] bg-[#f0f0f0] font-['Open_Sans','Noto_Sans',sans-serif] text-sm leading-5 text-black">
      <TitleBar />
      <MenuBar />
      <TopToolbars />
      <main className="flex min-h-0 flex-1">
        <Inspector />
        <div className="flex w-1 shrink-0 flex-col items-center justify-center">
          <div className="h-9 w-[2px] bg-[repeating-linear-gradient(to_bottom,#b4b4b4_0px,#b4b4b4_2px,transparent_2px,transparent_4px)]" />
        </div>
        <div className="flex min-w-0 flex-1 flex-col">
          <div className="flex min-h-0 flex-1">
            <DrawingWindow />
            <div className="w-1 shrink-0" />
            <BlockLibrary />
          </div>
          <div className="flex h-[5px] shrink-0 items-end justify-center">
            <div className="h-[2px] w-9 bg-[repeating-linear-gradient(to_right,#b4b4b4_0px,#b4b4b4_2px,transparent_2px,transparent_4px)]" />
          </div>
          <PaletteDock />
        </div>
        <div className="w-1 shrink-0" />
        <SideToolbar />
      </main>
      <BottomToolbar />
      <StatusBar />
    </div>
  );
}
